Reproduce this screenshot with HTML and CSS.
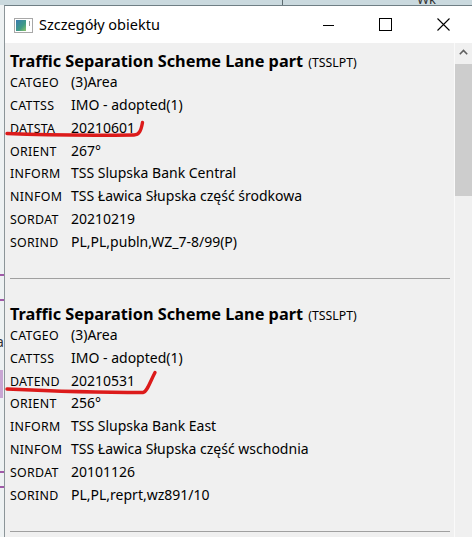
FILE: index.html
```html
<!DOCTYPE html>
<html lang="pl">
<head>
    <meta charset="UTF-8">
    <title>Szczegóły obiektu</title>
    <link rel="stylesheet" href="styles.css">
</head>
<body>

<div class="map-top">
    <span class="map-line"></span>
    <span class="map-label">Wk</span>
</div>

<div class="desk">
    <div class="map-left">
        <span class="mark m1"></span>
        <span class="mark m2"></span>
        <span class="mark-a">a</span>
        <span class="mark-block"></span>
        <span class="mark m3"></span>
        <span class="mark m4"></span>
    </div>

    <div class="okno">
        <div class="titlebar">
            <svg class="app-icon" width="19" height="15" viewBox="0 0 19 15">
                <defs>
                    <linearGradient id="g1" x1="0" y1="0" x2="1" y2="1">
                        <stop offset="0" stop-color="#3a7bb0"/>
                        <stop offset="0.6" stop-color="#3f9a86"/>
                        <stop offset="1" stop-color="#8ec46a"/>
                    </linearGradient>
                </defs>
                <rect x="0.5" y="0.5" width="18" height="14" fill="#fff" stroke="#a8a8a8"/>
                <rect x="2" y="2" width="10" height="11" fill="url(#g1)"/>
                <rect x="15" y="3" width="1" height="5" fill="#9a9a9a"/>
            </svg>
            <span class="title">Szczegóły obiektu</span>
            <div class="controls">
                <span class="btn"><svg width="12" height="12" viewBox="0 0 12 12"><path d="M0 6.5h11" stroke="#000" stroke-width="1"/></svg></span>
                <span class="btn"><svg width="13" height="13" viewBox="0 0 13 13"><rect x="0.5" y="0.5" width="12" height="12" fill="none" stroke="#000"/></svg></span>
                <span class="btn"><svg width="13" height="13" viewBox="0 0 13 13"><path d="M0.5 0.5l12 12M12.5 0.5l-12 12" stroke="#000" stroke-width="1.1"/></svg></span>
            </div>
        </div>

        <div class="tresc">
            <div class="lista">
                <div class="obiekt pierwszy">
                    <h3>Traffic Separation Scheme Lane part <small>(TSSLPT)</small></h3>
                    <div class="wiersz"><span class="atr">CATGEO</span><span class="wart">(3)Area</span></div>
                    <div class="wiersz"><span class="atr">CATTSS</span><span class="wart">IMO - adopted(1)</span></div>
                    <div class="wiersz"><span class="atr">DATSTA</span><span class="wart">20210601</span></div>
                    <div class="wiersz"><span class="atr">ORIENT</span><span class="wart">267°</span></div>
                    <div class="wiersz"><span class="atr">INFORM</span><span class="wart">TSS Slupska Bank Central</span></div>
                    <div class="wiersz"><span class="atr">NINFOM</span><span class="wart">TSS Ławica Słupska część środkowa</span></div>
                    <div class="wiersz"><span class="atr">SORDAT</span><span class="wart">20210219</span></div>
                    <div class="wiersz"><span class="atr">SORIND</span><span class="wart">PL,PL,publn,WZ_7-8/99(P)</span></div>
                </div>
                <div class="obiekt">
                    <h3>Traffic Separation Scheme Lane part <small>(TSSLPT)</small></h3>
                    <div class="wiersz"><span class="atr">CATGEO</span><span class="wart">(3)Area</span></div>
                    <div class="wiersz"><span class="atr">CATTSS</span><span class="wart">IMO - adopted(1)</span></div>
                    <div class="wiersz"><span class="atr">DATEND</span><span class="wart">20210531</span></div>
                    <div class="wiersz"><span class="atr">ORIENT</span><span class="wart">256°</span></div>
                    <div class="wiersz"><span class="atr">INFORM</span><span class="wart">TSS Slupska Bank East</span></div>
                    <div class="wiersz"><span class="atr">NINFOM</span><span class="wart">TSS Ławica Słupska część wschodnia</span></div>
                    <div class="wiersz"><span class="atr">SORDAT</span><span class="wart">20101126</span></div>
                    <div class="wiersz"><span class="atr">SORIND</span><span class="wart">PL,PL,reprt,wz891/10</span></div>
                </div>
            </div>

            <div class="scrollbar">
                <div class="strzalka">
                    <svg width="9" height="6" viewBox="0 0 9 6"><path d="M0.8 5.2L4.5 1.5L8.2 5.2" fill="none" stroke="#606060" stroke-width="1.6"/></svg>
                </div>
                <div class="suwak"></div>
            </div>
        </div>
    </div>
</div>

<!-- podkreslenia dorysowane recznie -->
<svg class="podkreslenia" width="472" height="537" viewBox="0 0 472 537">
    <path d="M7 133.5C40 135 90 135.5 134 135C139 135 141 131 142.5 122.5" fill="none" stroke="#dc1b1b" stroke-width="3.4" stroke-linecap="round"/>
    <path d="M7 389C50 391 100 392.5 143 392.5C147 392 150 382 155 372.5" fill="none" stroke="#dc1b1b" stroke-width="3.4" stroke-linecap="round"/>
</svg>

</body>
</html>
```

FILE: styles.css
```css
/* Ogolne */
body {
    margin: 0;
    width: 472px;
    height: 537px;
    overflow: hidden;
    background-color: #e3eaec;
    font-family: "Noto Sans", "Open Sans", sans-serif;
    color: #000;
    display: flex;
    flex-direction: column;
}

/* Kawalek mapy za oknem */
.map-top {
    height: 5px;
    background-color: #cad9de;
    position: relative;
    overflow: hidden;
}

.map-line {
    position: absolute;
    left: 282px;
    top: 0;
    width: 1px;
    height: 5px;
    background-color: #5d6b70;
}

.map-label {
    position: absolute;
    left: 417px;
    top: -10px;
    font-size: 13px;
    color: #333;
}

.desk {
    display: flex;
    flex: 1;
}

.map-left {
    width: 4px;
    background-color: #eef2f3;
    position: relative;
    overflow: hidden;
}

.mark {
    position: absolute;
    left: 0;
    width: 4px;
    height: 2px;
    background-color: #a05aa8;
}

.m1 { top: 269px; }
.m2 { top: 294px; }
.m3 { top: 466px; }
.m4 { top: 481px; }

.mark-a {
    position: absolute;
    left: -4px;
    top: 327px;
    font-size: 14px;
    color: #333;
}

.mark-block {
    position: absolute;
    left: 0;
    top: 365px;
    width: 3px;
    height: 28px;
    background-color: #c9a6d3;
}

/* Okno */
.okno {
    flex: 1;
    display: flex;
    flex-direction: column;
    border-left: 1px solid #8c9599;
    border-top: 1px solid #6f7e84;
    background-color: #f0f0f0;
}

.titlebar {
    height: 37px;
    background-color: #fff;
    display: flex;
    align-items: center;
    padding-left: 9px;
}

.app-icon {
    margin-top: 1px;
}

.title {
    font-family: "Noto Sans", sans-serif;
    font-size: 14.5px;
    margin-left: 6px;
    margin-top: -1px;
}

.controls {
    margin-left: auto;
    display: flex;
}

.btn {
    width: 58px;
    height: 37px;
    display: flex;
    align-items: center;
    justify-content: center;
}

.btn:first-child {
    margin-right: -2px;
}

/* Tresc */
.tresc {
    flex: 1;
    display: flex;
    min-height: 0;
}

.lista {
    flex: 1;
    padding-left: 5px;
    padding-right: 4px;
    border-right: 1px solid #fafafa;
    overflow: hidden;
}

.obiekt {
    padding-top: 25px;
    padding-bottom: 24px;
    border-bottom: 1px solid #a0a0a0;
}

.obiekt.pierwszy {
    padding-top: 8px;
}

h3 {
    margin: 0;
    font-size: 16.3px;
    font-weight: bold;
    line-height: 20px;
    height: 20px;
    white-space: nowrap;
}

h3 small {
    font-size: 12.3px;
    font-weight: normal;
    margin-left: 1px;
}

.wiersz {
    display: flex;
    align-items: baseline;
    height: 22.86px;
    line-height: 22.86px;
    white-space: nowrap;
}

.atr {
    width: 61px;
    flex-shrink: 0;
    font-size: 12.4px;
    letter-spacing: 0.3px;
}

.wart {
    font-size: 14px;
}

/* Pasek przewijania */
.scrollbar {
    width: 17px;
    background-color: #f0f0f0;
    display: flex;
    flex-direction: column;
}

.strzalka {
    height: 21px;
    display: flex;
    justify-content: center;
    padding-top: 6px;
    box-sizing: border-box;
}

.suwak {
    height: 132px;
    background-color: #cdcdcd;
}

.podkreslenia {
    position: absolute;
    left: 0;
    top: 0;
    pointer-events: none;
}
```
